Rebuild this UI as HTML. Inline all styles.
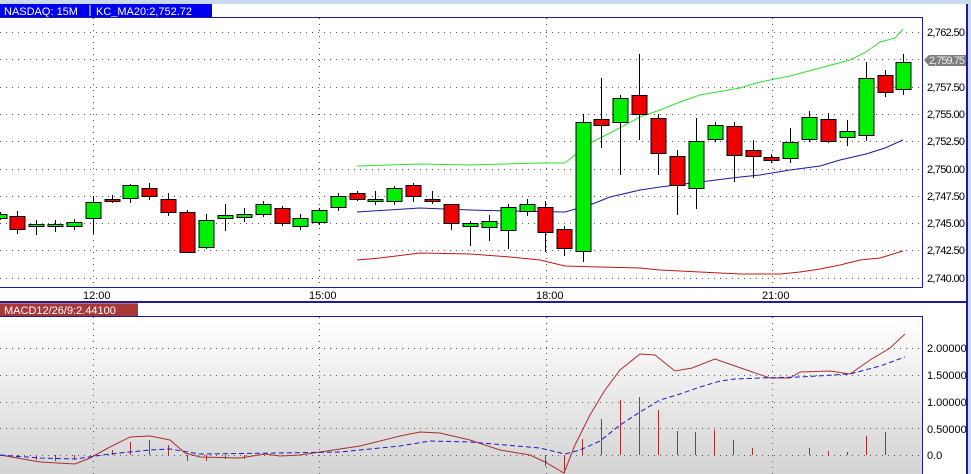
<!DOCTYPE html>
<html><head><meta charset="utf-8"><style>
html,body{margin:0;padding:0;width:971px;height:474px;overflow:hidden;background:#fff;font-family:"Liberation Sans",sans-serif}
</style></head><body>
<svg width="971" height="474" xmlns="http://www.w3.org/2000/svg" font-family="Liberation Sans, sans-serif">
<defs>
<linearGradient id="g" x1="0" y1="0" x2="0" y2="1"><stop offset="0" stop-color="#ffffff"/><stop offset="1" stop-color="#d4d4d4"/></linearGradient>
</defs>
<rect x="0" y="0" width="971" height="474" fill="#fff"/>
<rect x="0" y="0" width="971" height="4" fill="#c9d9f1"/>
<rect x="966" y="0" width="5" height="474" fill="#c9d9f1"/>
<line x1="967" y1="4" x2="967" y2="474" stroke="#1c1c9c" stroke-width="2"/>
<rect x="0" y="4" width="212" height="13" fill="#0000f0"/>
<line x1="90" y1="5" x2="90" y2="16" stroke="#fff"/>
<text x="4" y="15" font-size="11" fill="#fff">NASDAQ: 15M</text>
<text x="96" y="15" font-size="11" fill="#fff">KC_MA20:2,752.72</text>
<line x1="0" y1="17.5" x2="923" y2="17.5" stroke="#1c1c9c"/>
<line x1="922.5" y1="17" x2="922.5" y2="288" stroke="#1c1c9c"/>
<line x1="0" y1="287.5" x2="923" y2="287.5" stroke="#1c1c9c"/>
<g stroke="#555" stroke-dasharray="1,5" stroke-width="1">
<line x1="0" y1="32.5" x2="920" y2="32.5"/><line x1="0" y1="59.5" x2="920" y2="59.5"/><line x1="0" y1="87.5" x2="920" y2="87.5"/><line x1="0" y1="114.5" x2="920" y2="114.5"/><line x1="0" y1="141.5" x2="920" y2="141.5"/><line x1="0" y1="169.5" x2="920" y2="169.5"/><line x1="0" y1="196.5" x2="920" y2="196.5"/><line x1="0" y1="223.5" x2="920" y2="223.5"/><line x1="0" y1="250.5" x2="920" y2="250.5"/><line x1="0" y1="278.5" x2="920" y2="278.5"/>
<line x1="93.5" y1="18" x2="93.5" y2="287"/><line x1="319.5" y1="18" x2="319.5" y2="287"/><line x1="546.5" y1="18" x2="546.5" y2="287"/><line x1="772.5" y1="18" x2="772.5" y2="287"/>
</g>
<g font-size="11" fill="#000">
<text x="927" y="36" textLength="38">2,762.50</text><text x="927" y="91" textLength="38">2,757.50</text><text x="927" y="118" textLength="38">2,755.00</text><text x="927" y="145" textLength="38">2,752.50</text><text x="927" y="173" textLength="38">2,750.00</text><text x="927" y="200" textLength="38">2,747.50</text><text x="927" y="227" textLength="38">2,745.00</text><text x="927" y="254" textLength="38">2,742.50</text><text x="927" y="282" textLength="38">2,740.00</text>
</g>
<path d="M924 60 L929 55 L966 55 L966 66 L929 66 Z" fill="#7d7d7d"/>
<text x="929" y="64" font-size="11" fill="#eee" textLength="36">2,759.75</text>
<polyline fill="none" stroke="#33dd33" points="357,166 420,164 470,165 540,163 565,163 575,155 590,143 610,133 640,117 660,110 680,102 700,95 740,88 760,82 790,76 820,68 850,60 866,52 880,42 895,38 903,29"/>
<polyline fill="none" stroke="#1a1aa0" points="357,212 420,208 470,210 510,211 565,212 590,205 610,197 640,190 660,187 700,182 740,177 760,175 790,170 820,166 840,160 866,154 885,148 903,140"/>
<polyline fill="none" stroke="#c01818" points="357,260 380,258 420,253 470,254 510,257 540,260 565,266 600,267 640,268 660,270 700,272 740,274 780,274 800,272 820,269 840,265 860,260 880,258 903,251"/>
<g stroke="#000" stroke-width="1">
<line x1="0.5" y1="212" x2="0.5" y2="220"/><rect x="-8" y="214.5" width="15" height="4" fill="#00ee00"/>
<line x1="17.5" y1="211" x2="17.5" y2="234"/><rect x="10" y="216.5" width="15" height="13" fill="#ee0000"/>
<line x1="36.5" y1="220" x2="36.5" y2="235"/><rect x="29" y="224.5" width="15" height="2" fill="#00ee00"/>
<line x1="55.5" y1="220" x2="55.5" y2="232"/><rect x="48" y="224.5" width="15" height="2" fill="#00ee00"/>
<line x1="74.5" y1="219" x2="74.5" y2="230"/><rect x="67" y="222.5" width="15" height="4" fill="#00ee00"/>
<line x1="93.5" y1="196" x2="93.5" y2="234"/><rect x="86" y="202.5" width="15" height="16" fill="#00ee00"/>
<line x1="112.5" y1="195" x2="112.5" y2="203"/><rect x="105" y="199.5" width="15" height="2" fill="#ee0000"/>
<line x1="130.5" y1="184" x2="130.5" y2="203"/><rect x="123" y="185.5" width="15" height="13" fill="#00ee00"/>
<line x1="149.5" y1="183" x2="149.5" y2="200"/><rect x="142" y="188.5" width="15" height="8" fill="#ee0000"/>
<line x1="168.5" y1="193" x2="168.5" y2="216"/><rect x="161" y="199.5" width="15" height="13" fill="#ee0000"/>
<line x1="187.5" y1="210" x2="187.5" y2="253"/><rect x="180" y="212.5" width="15" height="40" fill="#ee0000"/>
<line x1="206.5" y1="214" x2="206.5" y2="249"/><rect x="199" y="220.5" width="15" height="27" fill="#00ee00"/>
<line x1="225.5" y1="204" x2="225.5" y2="231"/><rect x="218" y="215.5" width="15" height="3" fill="#00ee00"/>
<line x1="244.5" y1="208" x2="244.5" y2="222"/><rect x="237" y="214.5" width="15" height="3" fill="#00ee00"/>
<line x1="263.5" y1="201" x2="263.5" y2="217"/><rect x="256" y="204.5" width="15" height="10" fill="#00ee00"/>
<line x1="282.5" y1="206" x2="282.5" y2="226"/><rect x="275" y="208.5" width="15" height="15" fill="#ee0000"/>
<line x1="300.5" y1="214" x2="300.5" y2="230"/><rect x="293" y="218.5" width="15" height="8" fill="#00ee00"/>
<line x1="319.5" y1="208" x2="319.5" y2="225"/><rect x="312" y="210.5" width="15" height="12" fill="#00ee00"/>
<line x1="338.5" y1="193" x2="338.5" y2="211"/><rect x="331" y="196.5" width="15" height="11" fill="#00ee00"/>
<line x1="357.5" y1="191" x2="357.5" y2="201"/><rect x="350" y="193.5" width="15" height="6" fill="#ee0000"/>
<line x1="375.5" y1="191" x2="375.5" y2="205"/><rect x="368" y="199.5" width="15" height="2" fill="#00ee00"/>
<line x1="394.5" y1="186" x2="394.5" y2="205"/><rect x="387" y="188.5" width="15" height="13" fill="#00ee00"/>
<line x1="413.5" y1="183" x2="413.5" y2="202"/><rect x="406" y="185.5" width="15" height="11" fill="#ee0000"/>
<line x1="432.5" y1="191" x2="432.5" y2="204"/><rect x="425" y="199.5" width="15" height="2" fill="#ee0000"/>
<line x1="451.5" y1="204" x2="451.5" y2="230"/><rect x="444" y="204.5" width="15" height="19" fill="#ee0000"/>
<line x1="470.5" y1="221" x2="470.5" y2="246"/><rect x="463" y="223.5" width="15" height="3" fill="#00ee00"/>
<line x1="489.5" y1="215" x2="489.5" y2="241"/><rect x="482" y="221.5" width="15" height="6" fill="#00ee00"/>
<line x1="508.5" y1="204" x2="508.5" y2="249"/><rect x="501" y="207.5" width="15" height="23" fill="#00ee00"/>
<line x1="527.5" y1="199" x2="527.5" y2="216"/><rect x="520" y="204.5" width="15" height="7" fill="#00ee00"/>
<line x1="545.5" y1="201" x2="545.5" y2="252"/><rect x="538" y="207.5" width="15" height="25" fill="#ee0000"/>
<line x1="564.5" y1="226" x2="564.5" y2="256"/><rect x="557" y="229.5" width="15" height="19" fill="#ee0000"/>
<line x1="583.5" y1="114" x2="583.5" y2="262"/><rect x="576" y="122.5" width="15" height="129" fill="#00ee00"/>
<line x1="601.5" y1="78" x2="601.5" y2="148"/><rect x="594" y="119.5" width="15" height="6" fill="#ee0000"/>
<line x1="620.5" y1="95" x2="620.5" y2="175"/><rect x="613" y="98.5" width="15" height="24" fill="#00ee00"/>
<line x1="639.5" y1="54" x2="639.5" y2="140"/><rect x="632" y="95.5" width="15" height="19" fill="#ee0000"/>
<line x1="658.5" y1="114" x2="658.5" y2="175"/><rect x="651" y="118.5" width="15" height="35" fill="#ee0000"/>
<line x1="677.5" y1="150" x2="677.5" y2="215"/><rect x="670" y="156.5" width="15" height="29" fill="#ee0000"/>
<line x1="696.5" y1="118" x2="696.5" y2="209"/><rect x="689" y="141.5" width="15" height="47" fill="#00ee00"/>
<line x1="715.5" y1="122" x2="715.5" y2="142"/><rect x="708" y="125.5" width="15" height="14" fill="#00ee00"/>
<line x1="734.5" y1="122" x2="734.5" y2="182"/><rect x="727" y="126.5" width="15" height="29" fill="#ee0000"/>
<line x1="753.5" y1="140" x2="753.5" y2="178"/><rect x="746" y="150.5" width="15" height="6" fill="#ee0000"/>
<line x1="771.5" y1="154" x2="771.5" y2="163"/><rect x="764" y="157.5" width="15" height="3" fill="#ee0000"/>
<line x1="790.5" y1="128" x2="790.5" y2="163"/><rect x="783" y="142.5" width="15" height="16" fill="#00ee00"/>
<line x1="809.5" y1="111" x2="809.5" y2="142"/><rect x="802" y="117.5" width="15" height="22" fill="#00ee00"/>
<line x1="828.5" y1="113" x2="828.5" y2="143"/><rect x="821" y="119.5" width="15" height="22" fill="#ee0000"/>
<line x1="847.5" y1="120" x2="847.5" y2="146"/><rect x="840" y="131.5" width="15" height="6" fill="#00ee00"/>
<line x1="866.5" y1="62" x2="866.5" y2="141"/><rect x="859" y="78.5" width="15" height="57" fill="#00ee00"/>
<line x1="885.5" y1="70" x2="885.5" y2="97"/><rect x="878" y="75.5" width="15" height="17" fill="#ee0000"/>
<line x1="903.5" y1="54" x2="903.5" y2="95"/><rect x="896" y="62.5" width="15" height="27" fill="#00ee00"/>
</g>
<g font-size="11" fill="#000">
<text x="83" y="299">12:00</text><text x="309" y="299">15:00</text><text x="536" y="299">18:00</text><text x="762" y="299">21:00</text>
</g>
<line x1="0" y1="302" x2="967" y2="302" stroke="#1c1c9c" stroke-width="2"/>
<rect x="0" y="303" width="138" height="13" fill="#a83838"/>
<rect x="0" y="303" width="138" height="1" fill="#c07070"/>
<text x="4" y="314" font-size="11" fill="#fff">MACD12/26/9:2.44100</text>
<rect x="0" y="316.5" width="922" height="158" fill="url(#g)"/>
<line x1="0" y1="316.5" x2="923" y2="316.5" stroke="#1c1c9c"/>
<line x1="922.5" y1="316" x2="922.5" y2="474" stroke="#1c1c9c"/>
<g stroke="#555" stroke-dasharray="1,5">
<line x1="0" y1="348.5" x2="920" y2="348.5"/><line x1="0" y1="375.5" x2="920" y2="375.5"/><line x1="0" y1="402.5" x2="920" y2="402.5"/><line x1="0" y1="428.5" x2="920" y2="428.5"/><line x1="0" y1="455.5" x2="920" y2="455.5"/>
<line x1="93.5" y1="317" x2="93.5" y2="474"/><line x1="319.5" y1="317" x2="319.5" y2="474"/><line x1="546.5" y1="317" x2="546.5" y2="474"/><line x1="772.5" y1="317" x2="772.5" y2="474"/>
</g>
<g font-size="11" fill="#000">
<text x="927" y="352">2.00000</text><text x="927" y="379">1.50000</text><text x="927" y="406">1.00000</text><text x="927" y="433">0.50000</text><text x="927" y="459">0.0</text>
</g>
<g stroke="#a83030">
<line x1="17.5" y1="455" x2="17.5" y2="458"/><line x1="36.5" y1="455" x2="36.5" y2="460"/><line x1="55.5" y1="455" x2="55.5" y2="461"/><line x1="74.5" y1="455" x2="74.5" y2="459"/>
<line x1="112.5" y1="455" x2="112.5" y2="450"/><line x1="130.5" y1="455" x2="130.5" y2="442"/><line x1="149.5" y1="455" x2="149.5" y2="440"/><line x1="168.5" y1="455" x2="168.5" y2="445"/>
<line x1="187.5" y1="455" x2="187.5" y2="461"/><line x1="206.5" y1="455" x2="206.5" y2="461"/><line x1="225.5" y1="455" x2="225.5" y2="459"/><line x1="244.5" y1="455" x2="244.5" y2="459"/>
<line x1="545.5" y1="455" x2="545.5" y2="466"/><line x1="564.5" y1="455" x2="564.5" y2="473"/>
<line x1="582.5" y1="455" x2="582.5" y2="439"/><line x1="601.5" y1="455" x2="601.5" y2="419"/><line x1="620.5" y1="455" x2="620.5" y2="400"/><line x1="639.5" y1="455" x2="639.5" y2="397"/><line x1="658.5" y1="455" x2="658.5" y2="410"/><line x1="677.5" y1="455" x2="677.5" y2="431"/><line x1="695.5" y1="455" x2="695.5" y2="432"/><line x1="714.5" y1="455" x2="714.5" y2="430"/><line x1="733.5" y1="455" x2="733.5" y2="440"/><line x1="752.5" y1="455" x2="752.5" y2="448"/>
<line x1="809.5" y1="455" x2="809.5" y2="448"/><line x1="828.5" y1="455" x2="828.5" y2="451"/><line x1="847.5" y1="455" x2="847.5" y2="452"/><line x1="866.5" y1="455" x2="866.5" y2="436"/><line x1="885.5" y1="455" x2="885.5" y2="432"/>
</g>
<polyline fill="none" stroke="#a83030" points="0,455 40,462 75,464 90,458 110,447 130,437 150,436 170,440 185,453 200,457 240,458 265,454 280,456 300,455 320,452 360,446 400,436 420,432 440,433 470,440 500,450 530,455 545,462 564,473 575,445 590,415 605,390 620,370 640,354 655,355 675,371 692,368 715,359 735,366 770,378 790,378 800,372 830,371 850,374 870,360 890,348 905,334"/>
<polyline fill="none" stroke="#1a1acc" stroke-dasharray="5,3" points="0,455 40,458 75,459 110,454 150,450 170,449 200,454 280,453 340,452 400,446 430,441 470,442 540,448 565,454 580,450 600,441 620,425 640,412 660,400 680,394 700,387 720,381 735,379 760,378 800,377 850,374 880,366 905,357"/>
</svg>
</body></html>
